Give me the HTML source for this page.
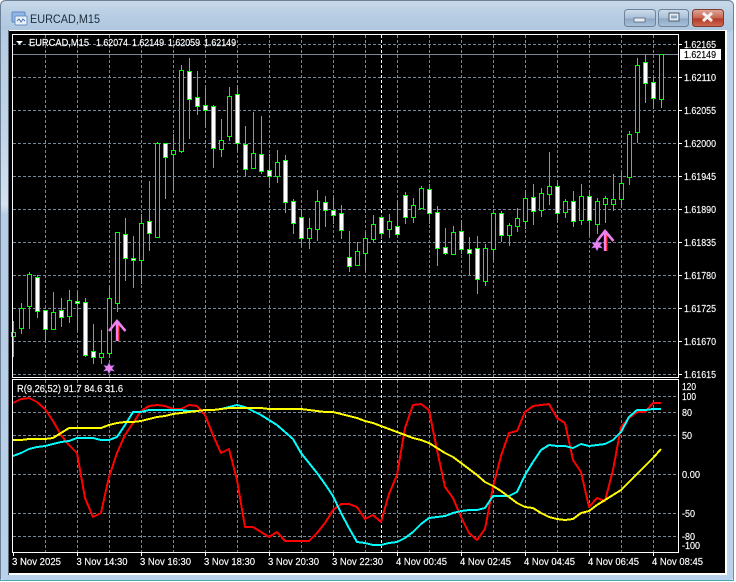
<!DOCTYPE html>
<html><head><meta charset="utf-8"><title>EURCAD,M15</title>
<style>
html,body{margin:0;padding:0;background:#fff;width:736px;height:582px;overflow:hidden}
svg{display:block}
text{font-family:"Liberation Sans",sans-serif;font-size:10px;fill:#fff;stroke:#fff;stroke-width:.15px}
</style></head><body>
<svg width="736" height="582" viewBox="0 0 736 582" xmlns="http://www.w3.org/2000/svg">
<defs>
<linearGradient id="tb" x1="0" y1="0" x2="0" y2="1"><stop offset="0" stop-color="#c9d9e9"/><stop offset=".5" stop-color="#b7cde3"/><stop offset="1" stop-color="#aec6de"/></linearGradient>
<linearGradient id="bt" x1="0" y1="0" x2="0" y2="1"><stop offset="0" stop-color="#cfdcea"/><stop offset=".5" stop-color="#a9c0d9"/><stop offset=".55" stop-color="#8fa9c6"/><stop offset="1" stop-color="#a9c2da"/></linearGradient>
<linearGradient id="cl" x1="0" y1="0" x2="0" y2="1"><stop offset="0" stop-color="#e0a79c"/><stop offset=".5" stop-color="#c9634f"/><stop offset=".55" stop-color="#b23a28"/><stop offset="1" stop-color="#cf6a52"/></linearGradient>
<linearGradient id="sd" x1="0" y1="0" x2="0" y2="1"><stop offset="0" stop-color="#b6cce3"/><stop offset=".2" stop-color="#c3d6e8"/><stop offset=".32" stop-color="#d6e2ee"/><stop offset=".34" stop-color="#b7cde4"/><stop offset="1" stop-color="#b9d1ea"/></linearGradient>
</defs>

<!-- window frame -->
<rect x="0" y="0" width="734" height="581" rx="6" fill="#b9d1ea"/>
<rect x="0" y="0" width="734" height="32" rx="6" fill="url(#tb)"/>
<rect x="1" y="30" width="7" height="545" fill="url(#sd)"/>
<path d="M.5 581V6Q.5 .5 6 .5H728Q733.5 .5 733.5 6V581" fill="none" stroke="#6d8196"/>
<path d="M0 580.5H734M733.5 30V581" stroke="#45a7b5" fill="none"/>

<!-- title icon -->
<rect x="12" y="12" width="13" height="10" rx="1" fill="#8fb6e6" stroke="#5f87bd"/>
<rect x="15" y="16" width="12" height="9" rx="1" fill="#e8f0fa" stroke="#6a90c4"/>
<path d="M17 21l2-2 2 3 2-3 2 2" fill="none" stroke="#4a74b0"/>
<text x="30" y="23" textLength="70" lengthAdjust="spacingAndGlyphs" style="font-size:12px;fill:#1c2b3a;stroke:none">EURCAD,M15</text>

<!-- buttons -->
<rect x="624.5" y="9.5" width="31" height="17" rx="3" fill="url(#bt)" stroke="#6f8196"/>
<rect x="634" y="18" width="11" height="4" fill="#e6ecf2" stroke="#55687c" stroke-width=".8"/>
<rect x="658.5" y="9.5" width="30" height="17" rx="3" fill="url(#bt)" stroke="#6f8196"/>
<rect x="669" y="13" width="10" height="8" fill="#e6ecf2" stroke="#4b5d70"/><rect x="671" y="15.5" width="6" height="3" fill="#8ea5bd"/>
<rect x="692.5" y="9.5" width="31" height="17" rx="3" fill="url(#cl)" stroke="#7c3a30"/>
<path d="M703 13l9 8M712 13l-9 8" stroke="#f4f0ee" stroke-width="3" fill="none"/>

<!-- client area -->
<rect x="8" y="30" width="719" height="545" fill="#fff"/>
<rect x="8" y="30" width="1" height="545" fill="#5d6b7a"/>
<rect x="9" y="31" width="716" height="542" fill="#000"/>

<!-- grid -->
<g fill="none" stroke="#778899" stroke-dasharray="3 2" shape-rendering="crispEdges">
<path d="M13 44.5H678M13 77.5H678M13 110.5H678M13 143.5H678M13 176.5H678M13 209.5H678M13 242.5H678M13 275.5H678M13 308.5H678M13 341.5H678M13 374.5H678"/>
<path d="M13 396.5H678M13 412.5H678M13 435.5H678M13 474.5H678M13 513.5H678M13 536.5H678"/>
<path d="M45.5 35V377M77.5 35V377M109.5 35V377M141.5 35V377M173.5 35V377M205.5 35V377M237.5 35V377M269.5 35V377M301.5 35V377M333.5 35V377M365.5 35V377M397.5 35V377M429.5 35V377M461.5 35V377M493.5 35V377M525.5 35V377M557.5 35V377M589.5 35V377M621.5 35V377M653.5 35V377"/>
<path d="M45.5 380V552M77.5 380V552M109.5 380V552M141.5 380V552M173.5 380V552M205.5 380V552M237.5 380V552M269.5 380V552M301.5 380V552M333.5 380V552M365.5 380V552M397.5 380V552M429.5 380V552M461.5 380V552M493.5 380V552M525.5 380V552M557.5 380V552M589.5 380V552M621.5 380V552M653.5 380V552"/>
</g>
<path d="M381.5 35V377M381.5 380V552" stroke="#fff" stroke-dasharray="3 2" fill="none" shape-rendering="crispEdges"/>
<path d="M13 54.5H678" stroke="#778899" shape-rendering="crispEdges"/>

<!-- wicks -->
<path fill="none" stroke="#00ff00" shape-rendering="crispEdges" d="M13.5 321V357M21.5 303V334M29.5 272V329M37.5 275V318M45.5 310V342M53.5 292V330M61.5 298V327M69.5 290V323M77.5 292V331M85.5 298V357M93.5 324V364M101.5 330V364M109.5 286V357M117.5 232V312M125.5 218V281M133.5 236V288M141.5 214V284M149.5 181V251M157.5 142V237M165.5 143V199M173.5 134V193M181.5 65V153M189.5 58V139M197.5 71V115M205.5 88V128M213.5 105V168M221.5 119V157M229.5 87V141M237.5 86V151M245.5 126V176M253.5 112V169M261.5 116V174M269.5 154V187M277.5 150V183M285.5 155V213M293.5 199V234M301.5 209V247M309.5 218V249M317.5 190V241M325.5 196V227M333.5 198V224M341.5 205V239M349.5 231V272M357.5 242V265M365.5 232V271M373.5 215V242M381.5 215V239M389.5 214V238M397.5 202V235M405.5 192V224M413.5 198V223M421.5 186V208M429.5 184V224M437.5 206V266M445.5 228V255M453.5 226V255M461.5 220V254M469.5 237V275M477.5 236V294M485.5 244V286M493.5 213V260M501.5 211V242M509.5 223V246M517.5 208V232M525.5 190V229M533.5 184V225M541.5 188V217M549.5 152V205M557.5 183V223M565.5 199V218M573.5 191V227M581.5 184V225M589.5 190V235M597.5 198V234M605.5 196V223M613.5 174V211M621.5 172V207M629.5 131V185M637.5 58V143M645.5 54V103M653.5 77V109M661.5 54V108"/>

<!-- hollow bodies -->
<path fill="#000" stroke="#00ff00" shape-rendering="crispEdges" d="M11.5 332.5h4v4h-4zM19.5 308.5h4v20h-4zM27.5 274.5h4v32h-4zM51.5 312.5h4v17h-4zM67.5 300.5h4v16h-4zM99.5 353.5h4v4h-4zM107.5 298.5h4v55h-4zM115.5 232.5h4v71h-4zM139.5 223.5h4v37h-4zM155.5 143.5h4v94h-4zM171.5 150.5h4v4h-4zM179.5 70.5h4v81h-4zM219.5 140.5h4v9h-4zM227.5 96.5h4v40h-4zM251.5 153.5h4v15h-4zM275.5 162.5h4v14h-4zM307.5 228.5h4v10h-4zM315.5 201.5h4v28h-4zM355.5 251.5h4v14h-4zM363.5 238.5h4v15h-4zM371.5 224.5h4v15h-4zM387.5 221.5h4v8h-4zM411.5 205.5h4v12h-4zM419.5 188.5h4v20h-4zM451.5 232.5h4v22h-4zM483.5 248.5h4v33h-4zM491.5 213.5h4v36h-4zM507.5 225.5h4v10h-4zM515.5 218.5h4v8h-4zM523.5 198.5h4v23h-4zM539.5 193.5h4v17h-4zM547.5 186.5h4v8h-4zM563.5 201.5h4v11h-4zM579.5 196.5h4v24h-4zM595.5 201.5h4v23h-4zM603.5 198.5h4v6h-4zM611.5 199.5h4v5h-4zM619.5 183.5h4v16h-4zM627.5 134.5h4v43h-4zM635.5 65.5h4v67h-4zM659.5 54.5h4v45h-4z"/>

<!-- white bodies -->
<path fill="#fff" stroke="#00ff00" shape-rendering="crispEdges" d="M35.5 277.5h4v34h-4zM43.5 310.5h4v19h-4zM59.5 310.5h4v7h-4zM75.5 301.5h4v2h-4zM83.5 302.5h4v53h-4zM91.5 351.5h4v6h-4zM123.5 234.5h4v24h-4zM131.5 258.5h4v2h-4zM147.5 221.5h4v12h-4zM163.5 143.5h4v14h-4zM187.5 71.5h4v28h-4zM195.5 97.5h4v9h-4zM203.5 105.5h4v5h-4zM211.5 106.5h4v42h-4zM235.5 94.5h4v49h-4zM243.5 144.5h4v25h-4zM259.5 154.5h4v17h-4zM267.5 170.5h4v6h-4zM283.5 160.5h4v42h-4zM291.5 201.5h4v22h-4zM299.5 217.5h4v21h-4zM323.5 202.5h4v8h-4zM331.5 210.5h4v5h-4zM339.5 213.5h4v17h-4zM347.5 257.5h4v9h-4zM379.5 217.5h4v16h-4zM395.5 226.5h4v8h-4zM403.5 195.5h4v22h-4zM427.5 189.5h4v24h-4zM435.5 212.5h4v36h-4zM443.5 247.5h4v6h-4zM459.5 231.5h4v18h-4zM467.5 249.5h4v4h-4zM475.5 248.5h4v31h-4zM499.5 213.5h4v22h-4zM531.5 197.5h4v14h-4zM555.5 186.5h4v27h-4zM571.5 201.5h4v20h-4zM587.5 196.5h4v24h-4zM643.5 62.5h4v21h-4zM651.5 82.5h4v16h-4z"/>

<!-- arrows and stars -->
<g fill="none">
<path d="M118 321V341" stroke="#ff3030" stroke-width="3"/>
<path d="M117 321V341" stroke="#ee82ee" stroke-width="2.4"/>
<path d="M109 331L117 321L125.500 331" stroke="#ee82ee" stroke-width="2.6"/>
<path d="M606 231V251" stroke="#ff3030" stroke-width="3"/>
<path d="M605 231V251" stroke="#ee82ee" stroke-width="2.4"/>
<path d="M597 241L605 231L613.500 241" stroke="#ee82ee" stroke-width="2.6"/>
</g>
<path d="M109 362.500l1.700 3.500 3.800-.7-2.400 2.900 2.400 3-3.800-.7-1.700 3.500-1.700-3.500-3.800.7 2.400-3-2.400-2.900 3.800.7z" fill="#ee82ee" stroke="#6a5acd" stroke-width=".4"/>
<path d="M597 239.500l1.700 3.500 3.800-.7-2.400 2.900 2.400 3-3.800-.7-1.700 3.500-1.700-3.500-3.800.7 2.400-3-2.400-2.900 3.800.7z" fill="#ee82ee" stroke="#6a5acd" stroke-width=".4"/>

<!-- indicator lines -->
<g fill="none" stroke-width="2" stroke-linejoin="round" shape-rendering="crispEdges">
<polyline stroke="#ff0000" points="13,403 21,399 29,398 37,402 45,409 53,421 61,435 69,445 77,453 85,498 93,517 101,513 109,477 117,453 125,435 133,423 141,411 149,406 157,405 165,406 173,409 181,409 189,405 197,406 205,415 213,435 221,453 229,449 237,480 245,527 253,527 261,532 269,537 277,532 285,541 293,541 301,541 309,541 317,533 325,523 333,510 341,504 349,504 357,507 365,519 373,515 381,522 389,494 397,475 405,428 413,405 421,404 429,410 437,450 445,487 453,498 461,517 469,533 477,540 485,529 493,487 501,456 509,433 517,431 525,412 533,406 541,405 549,404 557,418 565,423 573,460 581,472 589,507 597,498 605,501 613,470 621,427 629,418 637,412 645,412 653,403 661,403"/>
<polyline stroke="#00ffff" points="13,456 21,453 29,449 37,447 45,446 53,444 61,442 69,441 77,438 85,438 93,438 101,440 109,440 117,437 125,425 133,412 141,412 149,410 157,410 165,410 173,410 181,410 189,411 197,411 205,410 213,410 221,409 229,407 237,405 245,407 253,411 261,415 269,420 277,425 285,432 293,439 301,453 309,463 317,473 325,484 333,496 341,513 349,528 357,542 365,543 373,545 381,545 389,543 397,542 405,538 413,532 421,524 429,518 437,517 445,516 453,513 461,511 469,510 477,510 485,508 493,496 501,496 509,496 517,492 525,475 533,462 541,450 549,445 557,446 565,446 573,448 581,444 589,446 597,445 605,444 613,440 621,432 629,417 637,410 645,410 653,409 661,409"/>
<polyline stroke="#ffff00" points="13,440 21,440 29,439 37,439 45,439 53,438 61,433 69,428 77,428 85,428 93,428 101,428 109,425 117,423 125,422 133,422 141,421 149,419 157,417 165,416 173,414 181,413 189,412 197,411 205,410 213,410 221,409 229,408 237,408 245,408 253,408 261,408 269,409 277,409 285,409 293,409 301,409 309,410 317,411 325,412 333,412 341,414 349,416 357,418 365,421 373,423 381,426 389,429 397,432 405,435 413,438 421,440 429,443 437,448 445,453 453,457 461,463 469,469 477,475 485,482 493,486 501,491 509,497 517,503 525,507 533,508 541,513 549,517 557,519 565,520 573,519 581,513 589,511 597,505 605,500 613,495 621,490 629,482 637,474 645,466 653,458 661,449"/>
</g>

<!-- chart borders & ticks -->
<rect x="12.500" y="34.500" width="666" height="343" fill="none" stroke="#fff" shape-rendering="crispEdges"/>
<rect x="12.500" y="379.500" width="666" height="173" fill="none" stroke="#fff" shape-rendering="crispEdges"/>
<path d="M679 44.500h3M679 77.500h3M679 110.500h3M679 143.500h3M679 176.500h3M679 209.500h3M679 242.500h3M679 275.500h3M679 308.500h3M679 341.500h3M679 374.500h3M13.500 553v3M77.500 553v3M141.500 553v3M205.500 553v3M269.500 553v3M333.500 553v3M397.500 553v3M461.500 553v3M525.500 553v3M589.500 553v3M653.500 553v3" stroke="#fff" fill="none" shape-rendering="crispEdges"/>

<!-- header -->
<path d="M16 41h7l-3.500 3.500z" fill="#fff"/>
<text x="29" y="46" textLength="60" lengthAdjust="spacingAndGlyphs">EURCAD,M15</text>
<text x="96" y="46" textLength="32" lengthAdjust="spacingAndGlyphs">1.62074</text>
<text x="132" y="46" textLength="32" lengthAdjust="spacingAndGlyphs">1.62149</text>
<text x="168" y="46" textLength="32" lengthAdjust="spacingAndGlyphs">1.62059</text>
<text x="204" y="46" textLength="32" lengthAdjust="spacingAndGlyphs">1.62149</text>
<text x="17" y="392" textLength="106" lengthAdjust="spacingAndGlyphs">R(9,26,52) 91.7 84.6 31.6</text>

<!-- price axis -->
<text x="684" y="48" textLength="32" lengthAdjust="spacingAndGlyphs">1.62165</text>
<rect x="680" y="49" width="41" height="11" fill="#fff"/>
<text x="684" y="58" textLength="32" lengthAdjust="spacingAndGlyphs" style="fill:#000;stroke:#000">1.62149</text>
<text x="684" y="81" textLength="32" lengthAdjust="spacingAndGlyphs">1.62110</text>
<text x="684" y="114" textLength="32" lengthAdjust="spacingAndGlyphs">1.62055</text>
<text x="684" y="147" textLength="32" lengthAdjust="spacingAndGlyphs">1.62000</text>
<text x="684" y="180" textLength="32" lengthAdjust="spacingAndGlyphs">1.61945</text>
<text x="684" y="213" textLength="32" lengthAdjust="spacingAndGlyphs">1.61890</text>
<text x="684" y="246" textLength="32" lengthAdjust="spacingAndGlyphs">1.61835</text>
<text x="684" y="279" textLength="32" lengthAdjust="spacingAndGlyphs">1.61780</text>
<text x="684" y="312" textLength="32" lengthAdjust="spacingAndGlyphs">1.61725</text>
<text x="684" y="345" textLength="32" lengthAdjust="spacingAndGlyphs">1.61670</text>
<text x="684" y="378" textLength="32" lengthAdjust="spacingAndGlyphs">1.61615</text>

<!-- indicator axis -->
<text x="682" y="390" textLength="14" lengthAdjust="spacingAndGlyphs">120</text>
<text x="682" y="400" textLength="14" lengthAdjust="spacingAndGlyphs">100</text>
<text x="682" y="416" textLength="10" lengthAdjust="spacingAndGlyphs">80</text>
<text x="682" y="439" textLength="10" lengthAdjust="spacingAndGlyphs">50</text>
<text x="682" y="478" textLength="18" lengthAdjust="spacingAndGlyphs">0.00</text>
<text x="682" y="517" textLength="13" lengthAdjust="spacingAndGlyphs">-50</text>
<text x="682" y="540" textLength="13" lengthAdjust="spacingAndGlyphs">-80</text>
<text x="682" y="549" textLength="18" lengthAdjust="spacingAndGlyphs">-100</text>

<!-- time axis -->
<text x="12" y="565" textLength="49" lengthAdjust="spacingAndGlyphs">3 Nov 2025</text>
<text x="76.500" y="565" textLength="51" lengthAdjust="spacingAndGlyphs">3 Nov 14:30</text>
<text x="140" y="565" textLength="51" lengthAdjust="spacingAndGlyphs">3 Nov 16:30</text>
<text x="204" y="565" textLength="51" lengthAdjust="spacingAndGlyphs">3 Nov 18:30</text>
<text x="268" y="565" textLength="51" lengthAdjust="spacingAndGlyphs">3 Nov 20:30</text>
<text x="332" y="565" textLength="51" lengthAdjust="spacingAndGlyphs">3 Nov 22:30</text>
<text x="396" y="565" textLength="51" lengthAdjust="spacingAndGlyphs">4 Nov 00:45</text>
<text x="460" y="565" textLength="51" lengthAdjust="spacingAndGlyphs">4 Nov 02:45</text>
<text x="524" y="565" textLength="51" lengthAdjust="spacingAndGlyphs">4 Nov 04:45</text>
<text x="588" y="565" textLength="51" lengthAdjust="spacingAndGlyphs">4 Nov 06:45</text>
<text x="652" y="565" textLength="51" lengthAdjust="spacingAndGlyphs">4 Nov 08:45</text>
</svg>
</body></html>
